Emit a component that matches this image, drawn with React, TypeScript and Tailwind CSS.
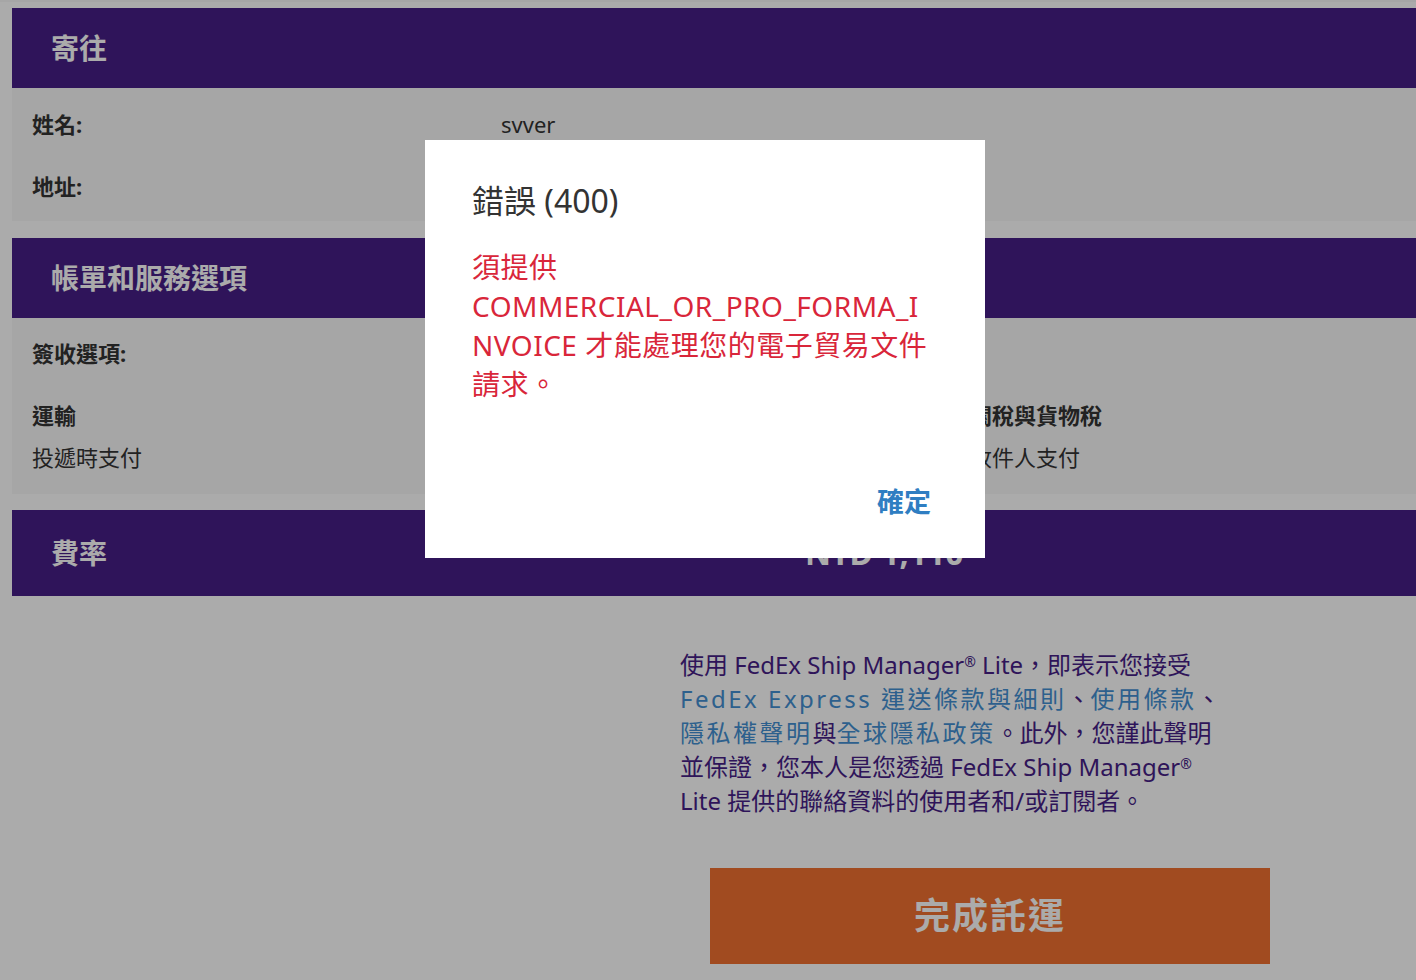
import React from "react";

const F = { fontFamily: '"Noto Sans", "Noto Sans CJK TC", sans-serif' };

function Header({ title, h, children }: { title: string; h: string; children?: React.ReactNode }) {
  return (
    <div className={`flex items-center bg-[#461e86] pl-[39px] ${h}`}>
      <div className="w-[754px] text-[28px] font-bold text-white">{title}</div>
      {children}
    </div>
  );
}

export default function App() {
  return (
    <div className="relative h-[980px] w-[1416px] overflow-hidden bg-white" style={F}>
      <div className="h-[2px] bg-[#f8f8f8]" />
      <div className="ml-[12px] mt-[6px] w-[1420px]">
        <Header title="寄往" h="h-[80px]" />
        <div className="bg-[#f8f8f8] px-[20px] pb-[17px] pt-[18px] text-[22px] text-[#333]">
          <div className="grid h-[36px] grid-cols-[469px_1fr] items-center">
            <div className="font-bold">姓名:</div>
            <div>svver</div>
          </div>
          <div className="mt-[26px] grid h-[36px] grid-cols-[469px_1fr] items-center">
            <div className="font-bold">地址:</div>
            <div></div>
          </div>
        </div>

        <div className="h-[17px]" />
        <Header title="帳單和服務選項" h="h-[80px]" />
        <div className="h-[176px] bg-[#f8f8f8] px-[20px] pt-[17px] text-[22px] text-[#333]">
          <div className="flex h-[36px] items-center font-bold">簽收選項:</div>
          <div className="mt-[26px] grid grid-cols-[469px_469px_1fr]">
            <div>
              <div className="flex h-[36px] items-center font-bold">運輸</div>
              <div className="mt-[6px] flex h-[36px] items-center">投遞時支付</div>
            </div>
            <div />
            <div>
              <div className="flex h-[36px] items-center font-bold">關稅與貨物稅</div>
              <div className="mt-[6px] flex h-[36px] items-center">收件人支付</div>
            </div>
          </div>
        </div>

        <div className="h-[16px]" />
        <Header title="費率" h="h-[86px]">
          <div className="text-[32px] font-bold text-white">NTD 1,110</div>
        </Header>
      </div>

      <div className="ml-[680px] mt-[52px] text-[24px] leading-[34px] text-[#461e86]">
        <div className="whitespace-nowrap">
          使用 FedEx Ship Manager<sup className="text-[14px]">®</sup> Lite，即表示您接受
        </div>
        <div className="whitespace-nowrap">
          <span className="tracking-[2.5px] text-[#4490d2]">FedEx Express 運送條款與細則</span>、
          <span className="tracking-[2.5px] text-[#4490d2]">使用條款</span>、
        </div>
        <div className="whitespace-nowrap">
          <span className="tracking-[2.5px] text-[#4490d2]">隱私權聲明</span>與
          <span className="tracking-[2.5px] text-[#4490d2]">全球隱私政策</span>。此外，您謹此聲明
        </div>
        <div className="whitespace-nowrap">
          並保證，您本人是您透過 FedEx Ship Manager<sup className="text-[14px]">®</sup>
        </div>
        <div className="whitespace-nowrap">Lite 提供的聯絡資料的使用者和/或訂閱者。</div>
      </div>

      <div className="ml-[710px] mt-[50px] flex h-[96px] w-[560px] items-center justify-center bg-[#f07030] text-[36px] font-bold tracking-[2px] text-white">
        完成託運
      </div>

      <div className="absolute inset-0 bg-black/[0.33]" />

      <div className="absolute left-[425px] top-[140px] flex h-[418px] w-[560px] flex-col bg-white pl-[47px] pr-[54px] pt-[41px]">
        <div className="h-[40px] text-[32px] leading-[40px] text-[#333]">錯誤 (400)</div>
        <div className="mt-[27px] text-[28px] leading-[39px] tracking-[0.5px] text-[#d9263a]">
          <div className="whitespace-nowrap">須提供</div>
          <div className="whitespace-nowrap">COMMERCIAL_OR_PRO_FORMA_I</div>
          <div className="whitespace-nowrap">NVOICE 才能處理您的電子貿易文件</div>
          <div className="whitespace-nowrap">請求。</div>
        </div>
        <div className="mt-auto mb-[38px] flex justify-end">
          <div className="text-[27px] font-bold leading-[36px] text-[#2f7ec2]">確定</div>
        </div>
      </div>
    </div>
  );
}
